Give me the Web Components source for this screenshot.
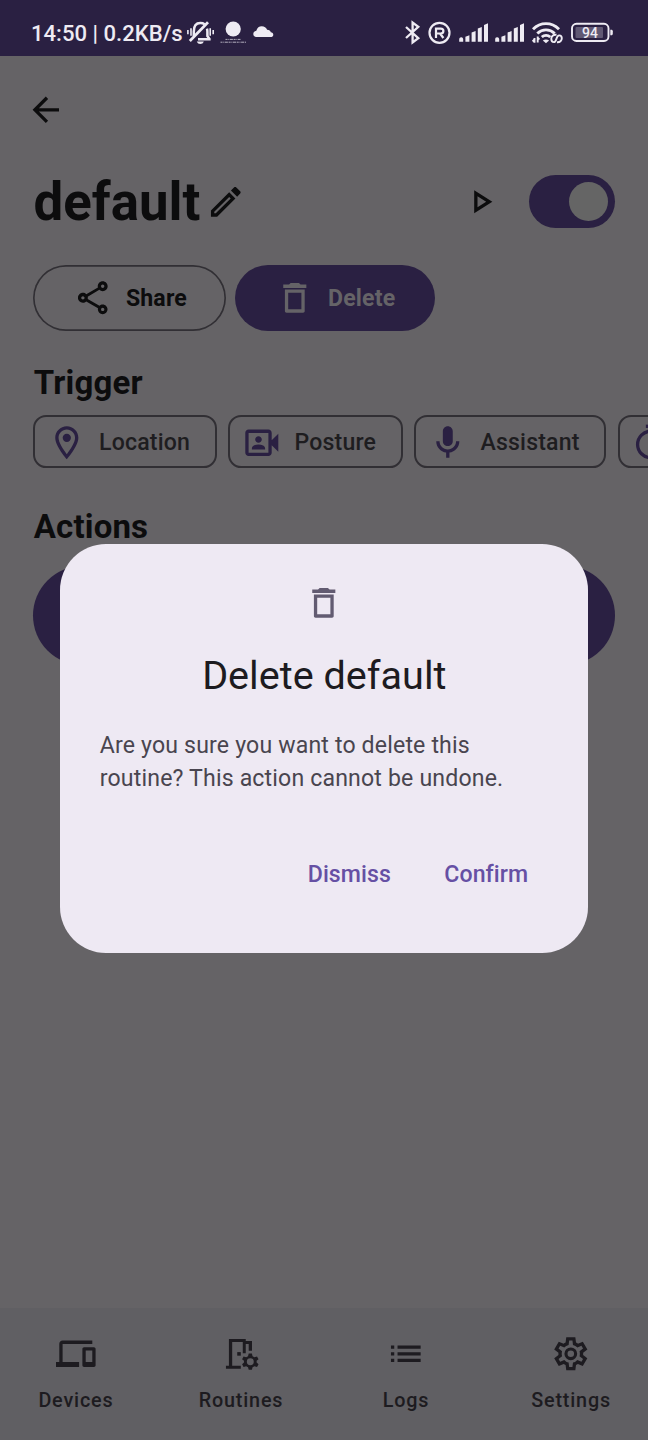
<!DOCTYPE html>
<html lang="en">
<head>
<meta charset="utf-8">
<title>Routine</title>
<style>
html,body{margin:0;padding:0}
body{width:648px;height:1440px;overflow:hidden;background:#656366;font-family:Roboto,"Liberation Sans",sans-serif}
</style>
</head>
<body>
<routine-app></routine-app>
<script>
const ICONS = {
  back: '<path d="M20 11H7.83l5.59-5.59L12 4l-8 8 8 8 1.41-1.41L7.83 13H20v-2z"/>',
  edit: '<path d="M14.06 9.02l.92.92L5.92 19H5v-.92l9.06-9.06M17.66 3c-.25 0-.51.1-.7.29l-1.83 1.83 3.75 3.75 1.83-1.83c.39-.39.39-1.02 0-1.41l-2.34-2.34c-.2-.2-.45-.29-.71-.29zm-3.6 3.19L3 17.25V21h3.75L17.81 9.94l-3.75-3.75z"/>',
  play: '<path d="M10 8.64L15.27 12 10 15.36V8.64M8 5v14l11-7L8 5z"/>',
  share: '<path d="M18 16.08c-.76 0-1.44.3-1.96.77L8.91 12.7c.05-.23.09-.46.09-.7s-.04-.47-.09-.7l7.05-4.11c.54.5 1.25.81 2.04.81 1.66 0 3-1.34 3-3s-1.34-3-3-3-3 1.34-3 3c0 .24.04.47.09.7L8.04 9.81C7.5 9.31 6.79 9 6 9c-1.66 0-3 1.34-3 3s1.34 3 3 3c.79 0 1.5-.31 2.04-.81l7.12 4.16c-.05.21-.08.43-.08.65 0 1.61 1.31 2.92 2.92 2.92s2.92-1.31 2.92-2.92-1.31-2.92-2.92-2.92zM18 4c.55 0 1 .45 1 1s-.45 1-1 1-1-.45-1-1 .45-1 1-1zM6 13c-.55 0-1-.45-1-1s.45-1 1-1 1 .45 1 1-.45 1-1 1zm12 7.02c-.55 0-1-.45-1-1s.45-1 1-1 1 .45 1 1-.45 1-1 1z"/>',
  trash: '<path d="M6 20c0 .6.4 1 1 1h10c.6 0 1-.4 1-1V7H6v13zM8 9h8v10H8V9zm7.500-5l-1-1h-5l-1 1H5v2h14V4h-3.500z"/>',
  place: '<path d="M12 2C8.13 2 5 5.13 5 9c0 5.25 7 13 7 13s7-7.75 7-13c0-3.87-3.13-7-7-7zM7 9c0-2.76 2.24-5 5-5s5 2.24 5 5c0 2.88-2.88 7.19-5 9.88C9.92 16.21 7 11.85 7 9z"/><circle cx="12" cy="9" r="2.5"/>',
  camera: '<path d="M18 10.48V6c0-1.1-.9-2-2-2H4c-1.1 0-2 .9-2 2v12c0 1.1.9 2 2 2h12c1.1 0 2-.9 2-2v-4.48l4 3.98v-11l-4 3.98zM16 18H4V6h12v12z"/><path d="M10 12c1.1 0 2-.9 2-2s-.9-2-2-2-2 .9-2 2 .9 2 2 2zm4 3.43c0-.81-.48-1.53-1.22-1.85-.85-.37-1.79-.58-2.78-.58s-1.93.21-2.78.58C6.48 13.9 6 14.62 6 15.43V16h8v-.57z"/>',
  mic: '<path d="M12 14c1.66 0 3-1.34 3-3V5c0-1.66-1.34-3-3-3S9 3.34 9 5v6c0 1.66 1.34 3 3 3zm5-3c0 2.76-2.24 5-5 5s-5-2.24-5-5H5c0 3.53 2.61 6.43 6 6.92V21h2v-3.08c3.39-.49 6-3.39 6-6.92h-2z"/>',
  timer: '<path d="M9 1h6v2H9z"/><path d="M11.500 8h1.500v6h-1.500z"/><circle cx="12" cy="13" r="8" fill="none" stroke="currentColor" stroke-width="2"/>',
  devices: '<path d="M4 6h18V4H4c-1.1 0-2 .9-2 2v11H0v3h14v-3H4V6zm19 2h-6c-.55 0-1 .45-1 1v10c0 .55.45 1 1 1h6c.55 0 1-.45 1-1V9c0-.55-.45-1-1-1zm-1 9h-4v-7h4v7z"/>',
  door: '<g transform="scale(.6)"><path d="M8 5H25V7H31.3V17H28V10H25V19.5H22V8H11.3V32H20V35H5V32H8z"/><rect x="16.4" y="18.3" width="3.6" height="3.6"/><g transform="translate(29.6 28)"><path fill-rule="evenodd" d="M-1.6-8.2H1.6L2.3-5.6 4.2-4.5 6.8-5.3 8.3-2.6 6.4-.9V.9L8.3 2.6 6.8 5.3 4.2 4.5 2.3 5.6 1.6 8.2H-1.6L-2.3 5.6-4.2 4.5-6.8 5.3-8.3 2.6-6.4.9V-.9L-8.3-2.6-6.8-5.3-4.2-4.5-2.3-5.6zM3.5 0A3.5 3.5 0 1 0-3.5 0 3.5 3.5 0 1 0 3.5 0z"/></g></g>',
  list: '<path d="M3 7h2v2H3zM3 11h2v2H3zM3 15h2v2H3zM7 7h14v2H7zM7 11h14v2H7zM7 15h14v2H7z"/>',
  gear: '<g transform="scale(.025) translate(0 960)"><path fill-rule="evenodd" d="m370-80-16-128q-13-5-24.5-12T307-235l-119 50L78-375l103-78q-1-7-1-13.5v-27q0-6.5 1-13.5L78-585l110-190 119 50q11-8 23-15t24-12l16-128h220l16 128q13 5 24.5 12t22.5 15l119-50 110 190-103 78q1 7 1 13.5v27q0 6.5-2 13.5l103 78-110 190-118-50q-11 8-23 15t-24 12L590-80H370Zm70-80h79l14-106q31-8 57.5-23.5T639-327l99 41 39-68-86-65q5-14 7-29.5t2-31.5q0-16-2-31.5t-7-29.5l86-65-39-68-99 42q-22-23-48.5-38.5T533-694l-13-106h-79l-14 106q-31 8-57.5 23.5T321-633l-99-41-39 68 86 64q-5 15-7 30t-2 32q0 16 2 31t7 30l-86 65 39 68 99-42q22 23 48.5 38.5T427-266l13 106Z"/><circle cx="480" cy="-480" r="117" fill="none" stroke="currentColor" stroke-width="76"/></g>'
};

function define(name, html) {
  const t = document.createElement('template');
  t.innerHTML = html;
  customElements.define(name, class extends HTMLElement {
    constructor() {
      super();
      this.attachShadow({mode: 'open'}).append(t.content.cloneNode(true));
    }
  });
}

customElements.define('md-icon', class extends HTMLElement {
  connectedCallback() {
    if (this.shadowRoot) return;
    this.attachShadow({mode: 'open'}).innerHTML =
      `<style>:host{display:block;flex:none;width:39.6px;height:39.6px}svg{display:block;width:100%;height:100%;fill:currentColor}</style>
       <svg viewBox="0 0 24 24">${ICONS[this.getAttribute('name')]}</svg>`;
  }
});

define('status-bar', `
<style>
:host{display:flex;align-items:flex-start;height:56px;background:#2a2042;color:#eeebf3;box-sizing:border-box;padding:20px 0 0 31px}
.time{font-size:22.1px;font-weight:500;line-height:27px;white-space:pre;width:156px}
svg{display:block;flex:none;fill:currentColor;height:26px;overflow:visible}
.line{fill:none;stroke:currentColor}
.right{display:flex;margin-left:131px}
text{font-family:Roboto,sans-serif}
</style>
<span class="time">14:50 | 0.2KB/s</span>
<svg width="27" viewBox="0 0 27 26"><g class="line" stroke-width="2.5">
  <path d="M6.800 16V11.500C6.800 6 9 3 13.300 3c1.800 0 3.200.4 4.300 1.200M20 8.600c.3 1 .4 2 .4 3.200V16l2 2.800v.5H11"/><path d="M2.800 21 21 2.200" stroke-width="2.700"/><path d="M4 8.300v7.500M.9 10v4.300M23.200 8.300v7.500M26.200 10v4.300" stroke-width="1.600"/></g><path d="M9.800 21.500h7c-.6 1.700-1.900 2.500-3.500 2.500s-2.900-.8-3.500-2.500z"/></svg>
<svg width="26" viewBox="0 0 26 26" style="margin-left:6px"><circle cx="13.200" cy="9" r="7.600"/><path class="line" stroke-width="1" stroke-dasharray="2 .8 1 .6 3 .7" opacity=".7" d="M5.500 19.400h15M.5 22.200h25.500"/></svg>
<svg width="21" viewBox="0 0 21 26" style="margin-left:6.500px"><path d="M4 17C1.500 17 .3 15.700.3 14c0-1.800 1.200-3 3-3.300C4.200 7.800 6.200 6.300 8.700 6.300c2.600 0 4.600 1.500 5.400 3.500 2.200.1 3.400 1.200 3.700 2.500 1.500.2 2.500 1 2.500 2.400 0 1.400-1.100 2.300-2.800 2.300z"/></svg>
<div class="right">
<svg width="15" viewBox="0 0 15 26"><path class="line" stroke-width="2.300" d="M1 7 13.300 18.200 7.600 22.500V2.500L13.300 6.800 1 18"/></svg>
<svg width="23" viewBox="0 0 23 26" style="margin-left:8.500px"><circle class="line" cx="11.500" cy="12.800" r="10" stroke-width="2.200"/><path class="line" stroke-width="2.200" d="M8 18V8.600h4.700c1.800 0 2.700 1 2.700 2.400s-.9 2.500-2.700 2.500H8M12 13.500l3.400 4.500"/></svg>
<svg width="29" viewBox="0 0 29 26" style="margin-left:8px"><path d="M.2 19.500a2 2 0 0 1 4-.5v2.800h-4zM6.400 16.700l4-1.500v6.600h-4zM12.600 12.600l4-1.700v10.900h-4zM18.800 8.600l4-1.700v14.900h-4zM25 4.900l4-1.700v18.600h-4z"/></svg>
<svg width="29" viewBox="0 0 29 26" style="margin-left:7px"><path d="M.2 19.500a2 2 0 0 1 4-.5v2.800h-4zM6.400 16.700l4-1.500v6.600h-4zM12.600 12.600l4-1.700v10.900h-4zM18.800 8.600l4-1.700v14.900h-4zM25 4.900l4-1.700v18.600h-4z"/></svg>
<svg width="31" viewBox="0 0 31 26" style="margin-left:7.500px"><g class="line"><path stroke-width="2.900" d="M1 9.200C8.500 1.800 19.500 1.800 27 9.200M5.300 13.500c5-4.800 12.400-4.800 17.400 0M9.800 17c2.500-2.200 6-2.200 8.500 0"/><path stroke-width="1.900" d="M2.500 18v4.800M5.700 16.500v6M.6 20l1.900 2M5.700 17.500l1.700 2"/><path stroke-width="1.900" d="M24.500 14.800c-3.400-.4-5.200 1.600-5.200 3.900 0 2 1 3.400 2.600 3.400 3 0 2-6.700 5.300-6.700 1.700 0 2.600 1.300 2.600 2.900 0 2.300-1.700 4.100-4.800 3.900"/></g><path d="M10.800 20.500c1.800-1.400 4.500-1.400 6.300 0L14 23.200z"/></svg>
<svg width="43" viewBox="0 0 43 26" style="margin-left:8px"><rect class="line" x="1" y="3.800" width="36.500" height="17.200" rx="4.500" stroke-width="1.900"/><rect x="4.500" y="7" width="27.500" height="11" rx="1" opacity=".28"/><path d="M39.300 9.700h1c1 0 1.500.7 1.500 1.500v2.500c0 .8-.5 1.500-1.500 1.500h-1z"/><text x="19" y="17.600" text-anchor="middle" font-size="14" font-weight="500">94</text></svg>
</div>`);

define('md-switch', `
<style>:host{display:flex;align-items:center;justify-content:flex-end;width:86px;height:53px;border-radius:27px;background:#2a2042;box-sizing:border-box;padding-right:6.800px}
i{width:39.600px;height:39.600px;border-radius:50%;background:#656565}</style><i></i>`);

define('pill-button', `
<style>:host{display:flex;align-items:center;gap:13.800px;height:66px;box-sizing:border-box;padding:1px 39.400px 0 39.500px;border-radius:33px;font-size:23.100px;font-weight:700;letter-spacing:.16px;color:#0c0c0d;box-shadow:inset 0 0 0 1.650px #312f34}
:host([filled]){background:#2a2042;color:#656367;box-shadow:none;padding-right:40px}</style>
<slot name="icon"></slot><slot></slot>`);

define('trigger-chip', `
<style>:host{display:flex;flex:none;align-items:center;gap:13px;height:53px;box-sizing:border-box;padding:2px 24.500px 0 11.500px;border:2px solid #312f34;border-radius:13.200px;font-size:23.100px;font-weight:500;color:#1e1d20;letter-spacing:.17px}
::slotted(md-icon){color:#2a2042}</style>
<slot name="icon"></slot><slot></slot>`);

define('nav-item', `
<style>:host{display:flex;flex:1;flex-direction:column;align-items:center;padding-top:26.300px;gap:14.300px;color:#1d1b20;font-size:19.800px;font-weight:500;line-height:26px;letter-spacing:.82px}</style>
<slot name="icon"></slot><span><slot></slot></span>`);

define('nav-bar', `
<style>:host{display:flex;height:132px;gap:13.200px;background:#605f63;margin-top:auto;padding-right:1px}
</style><slot></slot>`);

define('confirm-dialog', `
<style>:host{position:absolute;left:60px;top:543.500px;width:528px;height:409px;box-sizing:border-box;border-radius:46px;background:#eee9f3;padding:39.600px;display:flex;flex-direction:column}
md-icon{align-self:center;color:#625b71}
h2{margin:26px 0 0 .6px;font-size:39.600px;font-weight:400;line-height:53px;text-align:center;color:#1d1b20}
p{margin:27px 0 0 .2px;font-size:23.100px;line-height:33px;color:#49454f;letter-spacing:.16px}
.actions{display:flex;justify-content:flex-end;gap:53.400px;margin:63px 20.200px 0 0;font-size:23.100px;font-weight:500;line-height:33px;color:#6650a4;letter-spacing:.08px}
</style>
<md-icon name="trash"></md-icon>
<h2><slot name="title"></slot></h2>
<p><slot></slot></p>
<div class="actions"><span>Dismiss</span><span>Confirm</span></div>`);

define('routine-app', `
<style>
:host{display:flex;flex-direction:column;width:648px;height:1440px;position:relative;overflow:hidden;background:#656366;color:#0c0c0d}
main{padding:0 33px}
.back{display:block;margin:33.500px 0 0 -6.700px}
.head{display:flex;align-items:center;height:66px;margin-top:39.500px}
h1{margin:0 0 0 .5px;font-size:52.800px;font-weight:700;line-height:62px}
.edit{margin-left:5.800px}
.play{margin-left:auto;margin-right:28.200px}
.row{display:flex;gap:8.800px;margin-top:30.200px}
h3{margin:32.700px 0 0 .8px;font-size:33px;font-weight:700;line-height:40px;letter-spacing:.15px}
.chips{display:flex;gap:11.800px;margin-top:11.500px;margin-right:-33px;overflow:hidden}
.add{height:99px;border-radius:50px;background:#2a2042;margin-top:18.300px}
</style>
<status-bar></status-bar>
<main>
<md-icon class="back" name="back"></md-icon>
<div class="head"><h1>default</h1><md-icon class="edit" name="edit"></md-icon><md-icon class="play" name="play"></md-icon><md-switch></md-switch></div>
<div class="row"><pill-button><md-icon slot="icon" name="share"></md-icon>Share</pill-button><pill-button filled><md-icon slot="icon" name="trash"></md-icon>Delete</pill-button></div>
<h3>Trigger</h3>
<div class="chips"><trigger-chip><md-icon slot="icon" name="place"></md-icon>Location</trigger-chip><trigger-chip><md-icon slot="icon" name="camera"></md-icon>Posture</trigger-chip><trigger-chip><md-icon slot="icon" name="mic"></md-icon>Assistant</trigger-chip><trigger-chip><md-icon slot="icon" name="timer"></md-icon></trigger-chip></div>
<h3 style="margin-top:39.400px">Actions</h3>
<div class="add"></div>
</main>
<nav-bar><nav-item><md-icon slot="icon" name="devices"></md-icon>Devices</nav-item><nav-item><md-icon slot="icon" name="door"></md-icon>Routines</nav-item><nav-item><md-icon slot="icon" name="list"></md-icon>Logs</nav-item><nav-item><md-icon slot="icon" name="gear"></md-icon>Settings</nav-item></nav-bar>
<confirm-dialog><span slot="title">Delete default</span>Are you sure you want to delete this routine? This action cannot be undone.</confirm-dialog>`);
</script>
</body>
</html>
